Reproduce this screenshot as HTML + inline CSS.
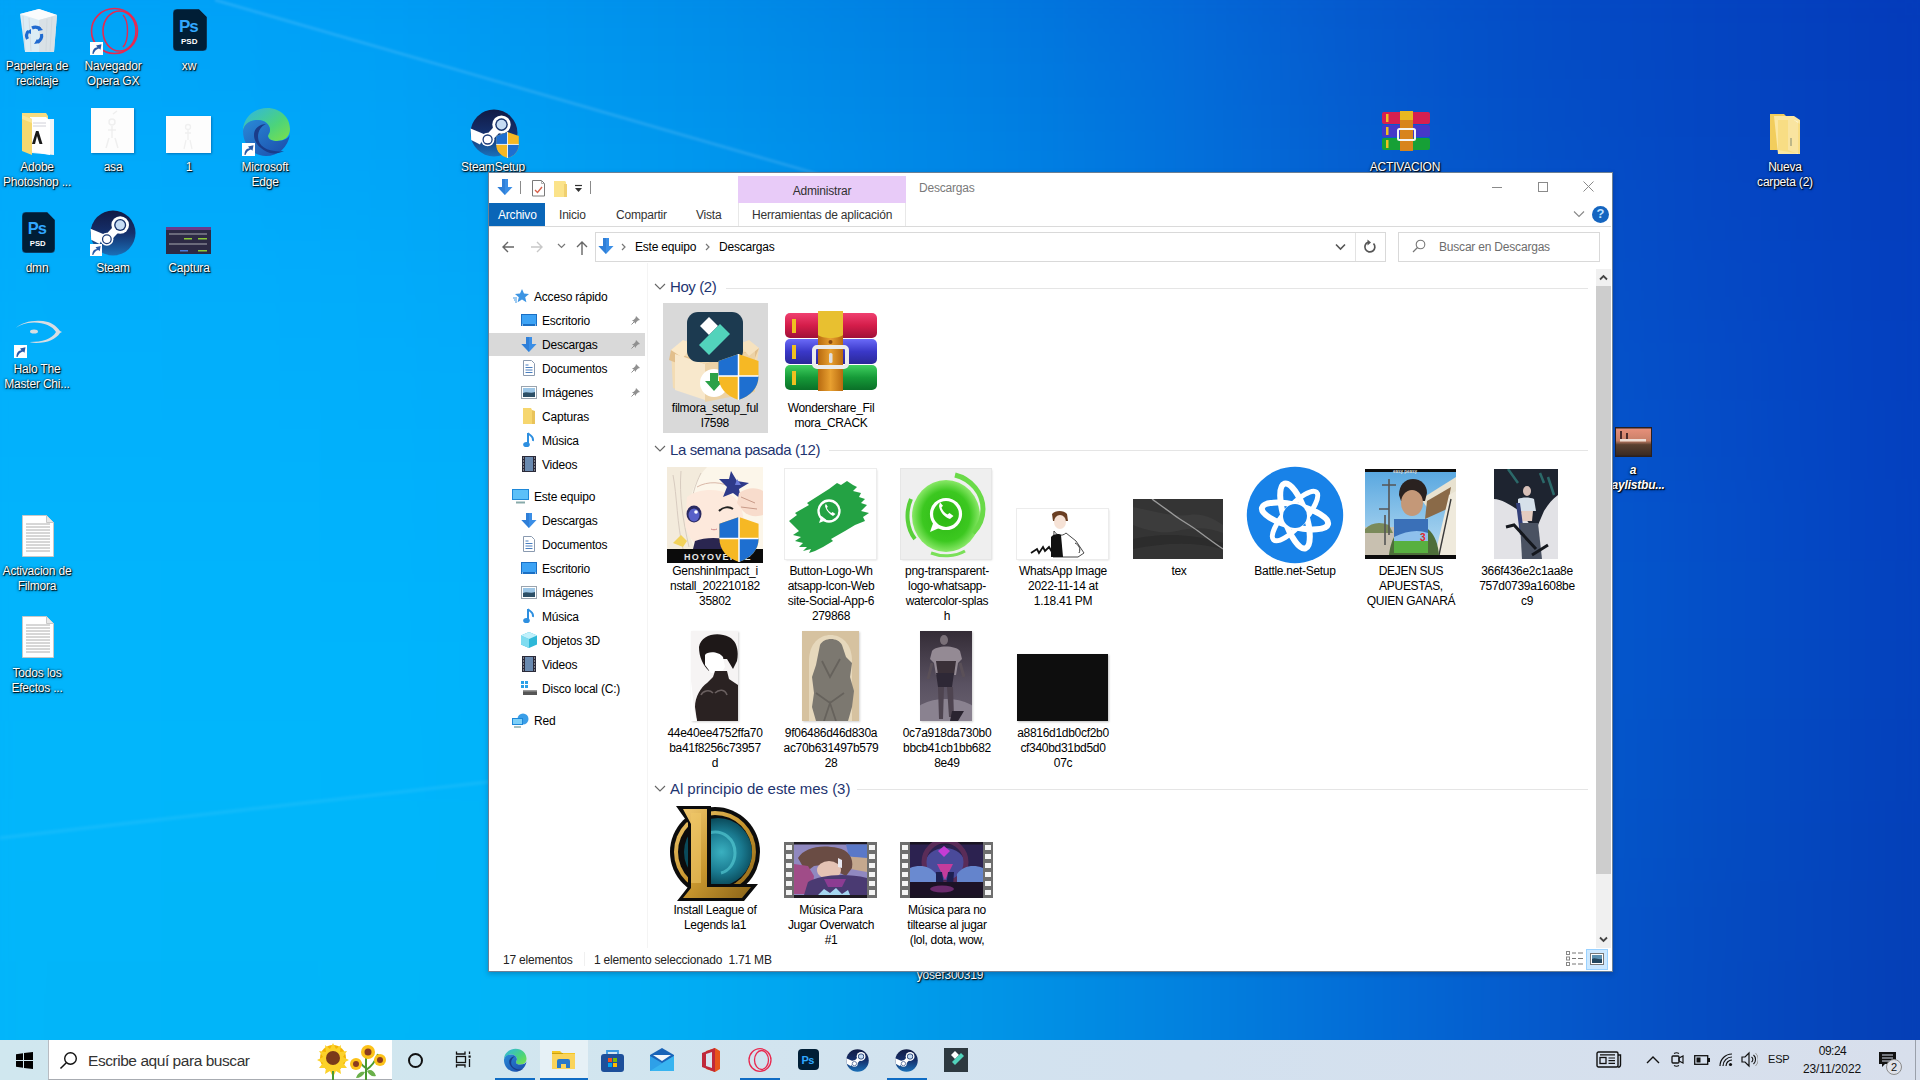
<!DOCTYPE html>
<html><head><meta charset="utf-8">
<style>
*{margin:0;padding:0;box-sizing:border-box}
html,body{width:1920px;height:1080px;overflow:hidden}
body{font-family:"Liberation Sans",sans-serif;font-size:12px;position:relative;background:#0a7fe0}
.a{position:absolute}
#wall{left:0;top:0;width:1920px;height:1040px;overflow:hidden}
#wallin{position:absolute;left:-80px;top:-80px;width:2080px;filter:blur(40px)}
.dl{position:absolute;width:80px;text-align:center;color:#fff;font-size:12px;line-height:15px;letter-spacing:-0.2px;
text-shadow:1px 1px 1px rgba(0,0,0,.95),0 0 2px rgba(0,0,0,.7),0 1px 3px rgba(0,0,0,.5)}
#win{left:488px;top:172px;width:1125px;height:800px;background:#fff;border:1px solid rgba(30,60,90,.65);box-shadow:0 2px 5px rgba(0,20,60,.25)}
.t{position:absolute;white-space:nowrap;font-size:12px;letter-spacing:-0.2px;color:#000;line-height:14px}
.gh{position:absolute;white-space:nowrap;font-size:15px;line-height:18px;color:#1e3470;letter-spacing:-0.4px}
.lb{position:absolute;width:120px;text-align:center;font-size:12px;line-height:15px;letter-spacing:-0.3px;color:#000;white-space:nowrap}
#tb{left:0;top:1040px;width:1920px;height:40px;background:linear-gradient(90deg,#d0e7ef 0%,#d1e6ef 25%,#d3e1ef 62%,#d8dfec 100%)}
</style></head>
<body>
<div id="wall" class="a"><div id="wallin"><div style="height:80px;background:linear-gradient(90deg,#00a5f8 0px,#00a2f7 160px,#009ff6 320px,#009af3 480px,#0093ed 640px,#008ae7 800px,#007fe2 960px,#0173dc 1120px,#0465d5 1280px,#0557cc 1440px,#044cc6 1600px,#0444c1 1760px,#043dbc 1920px,#0436b7 2080px)"></div>
<div style="height:80px;background:linear-gradient(90deg,#00a7f9 0px,#00a5f8 160px,#00a3f8 320px,#009ff5 480px,#0097ef 640px,#008ee9 800px,#0084e4 960px,#0178df 1120px,#0469d7 1280px,#055ace 1440px,#044ec7 1600px,#0446c2 1760px,#043fbd 1920px,#0437b8 2080px)"></div>
<div style="height:80px;background:linear-gradient(90deg,#00aafa 0px,#00a8fa 160px,#00a7fa 320px,#01a3f7 480px,#009cf1 640px,#0093ec 800px,#0089e7 960px,#007de1 1120px,#036dd9 1280px,#055ccf 1440px,#0450c8 1600px,#0447c3 1760px,#0440be 1920px,#0438b9 2080px)"></div>
<div style="height:80px;background:linear-gradient(90deg,#01acfb 0px,#01abfb 160px,#01aafb 320px,#01a7f8 480px,#01a1f3 640px,#0098ee 800px,#008de9 960px,#0081e4 1120px,#0371db 1280px,#0560d1 1440px,#0553c9 1600px,#0549c5 1760px,#0441c0 1920px,#0439ba 2080px)"></div>
<div style="height:80px;background:linear-gradient(90deg,#01affb 0px,#01adfb 160px,#02adfb 320px,#02abfa 480px,#01a5f6 640px,#009cf1 800px,#0092ec 960px,#0085e6 1120px,#0275dd 1280px,#0463d4 1440px,#0555cc 1600px,#054bc6 1760px,#0442c1 1920px,#043abb 2080px)"></div>
<div style="height:80px;background:linear-gradient(90deg,#01b1fc 0px,#02b0fc 160px,#02affb 320px,#02adfb 480px,#01a9f8 640px,#00a0f3 800px,#0095ed 960px,#0088e7 1120px,#0278df 1280px,#0467d5 1440px,#0558cd 1600px,#054dc7 1760px,#0443c2 1920px,#043bbb 2080px)"></div>
<div style="height:80px;background:linear-gradient(90deg,#02b2fc 0px,#02b1fc 160px,#02b1fc 320px,#01b0fb 480px,#00acf9 640px,#00a3f4 800px,#0098ee 960px,#008ae8 1120px,#027ae0 1280px,#0369d7 1440px,#055acf 1600px,#054ec8 1760px,#0444c2 1920px,#043bbb 2080px)"></div>
<div style="height:80px;background:linear-gradient(90deg,#02b4fc 0px,#02b3fc 160px,#02b3fc 320px,#01b2fc 480px,#00aefa 640px,#00a6f5 800px,#009aef 960px,#008ce8 1120px,#017ce0 1280px,#036bd8 1440px,#045cd0 1600px,#0550c9 1760px,#0445c2 1920px,#043bbb 2080px)"></div>
<div style="height:80px;background:linear-gradient(90deg,#02b5fc 0px,#02b4fc 160px,#01b4fc 320px,#00b4fc 480px,#00b0fa 640px,#00a8f5 800px,#009cef 960px,#008ee8 1120px,#017de1 1280px,#036cd8 1440px,#045dd0 1600px,#0451c9 1760px,#0446c1 1920px,#043cb9 2080px)"></div>
<div style="height:80px;background:linear-gradient(90deg,#02b6fc 0px,#02b5fc 160px,#01b5fc 320px,#00b5fc 480px,#00b1fa 640px,#00a9f5 800px,#009def 960px,#008fe8 1120px,#017ee1 1280px,#036dd8 1440px,#045dd0 1600px,#0451c8 1760px,#0446c0 1920px,#043cb8 2080px)"></div>
<div style="height:80px;background:linear-gradient(90deg,#02b6fc 0px,#02b6fb 160px,#01b6fb 320px,#00b5fb 480px,#00b2f9 640px,#00aaf5 800px,#009eef 960px,#0090e8 1120px,#017fe0 1280px,#036dd8 1440px,#045dcf 1600px,#0450c6 1760px,#0445be 1920px,#043bb7 2080px)"></div>
<div style="height:80px;background:linear-gradient(90deg,#02b7fc 0px,#02b6fb 160px,#01b6fa 320px,#00b6fa 480px,#00b3f8 640px,#00abf4 800px,#009fee 960px,#0090e7 1120px,#017fe0 1280px,#036dd7 1440px,#045cce 1600px,#044fc4 1760px,#0444bc 1920px,#053bb5 2080px)"></div>
<div style="height:80px;background:linear-gradient(90deg,#02b7fb 0px,#02b6fa 160px,#01b6f9 320px,#00b6f9 480px,#01b3f8 640px,#00abf3 800px,#009fed 960px,#0090e6 1120px,#0280df 1280px,#036dd7 1440px,#045bce 1600px,#054dc3 1760px,#0544bb 1920px,#053bb4 2080px)"></div>
<div style="height:80px;background:linear-gradient(90deg,#03b7fb 0px,#02b5f9 160px,#01b5f9 320px,#00b6f8 480px,#01b3f7 640px,#01abf2 800px,#009fec 960px,#0190e5 1120px,#0280de 1280px,#036dd7 1440px,#055bcd 1600px,#054dc3 1760px,#0543ba 1920px,#063ab2 2080px)"></div>
<div style="height:80px;background:linear-gradient(90deg,#03b7fa 0px,#02b5f9 160px,#02b5f8 320px,#01b5f7 480px,#02b2f6 640px,#01abf1 800px,#009feb 960px,#0190e4 1120px,#0280de 1280px,#046dd6 1440px,#055ccd 1600px,#064dc3 1760px,#0643b9 1920px,#063ab2 2080px)"></div>
<div style="height:80px;background:linear-gradient(90deg,#03b8fa 0px,#03b5f8 160px,#02b5f7 320px,#02b4f6 480px,#02b1f4 640px,#02a9f0 800px,#019eea 960px,#018fe3 1120px,#027fdd 1280px,#046ed5 1440px,#055ccc 1600px,#064fc2 1760px,#0644b9 1920px,#073bb1 2080px)"></div></div></div></div>


<svg width="0" height="0" style="position:absolute">
<defs>
 <symbol id="sc" viewBox="0 0 13 13"><rect width="13" height="13" fill="#fff"/><path d="M2.5 12C2.5 7.5 4.5 5.5 7.5 5.3L6 3.5 11.5 2.2 10.5 7.8 9 6.5C6.5 7 4.5 9 3.5 12z" fill="#2a5aa8"/></symbol>
 <symbol id="psd" viewBox="0 0 34 42"><path d="M4 0h22l8 8v30a4 4 0 0 1-4 4H4a4 4 0 0 1-4-4V4a4 4 0 0 1 4-4z" fill="#001e36" stroke="#2a9ae8" stroke-width=".8" stroke-opacity=".5"/><text x="6" y="23" font-family="Liberation Sans" font-weight="bold" font-size="17" fill="#31a8ff" letter-spacing="-1">Ps</text><text x="8" y="35" font-family="Liberation Sans" font-weight="bold" font-size="8" fill="#fff">PSD</text></symbol>
 <symbol id="doc" viewBox="0 0 32 42"><path d="M.5 .5h24l7 7v34H.5z" fill="#fff" stroke="#c8c8c8"/><path d="M24.5 .5v7h7" fill="#e8e8e8" stroke="#c8c8c8"/><g stroke="#9a9a9a" stroke-width=".8"><path d="M4 9h24M4 12h24M4 15h24M4 18h24M4 21h24M4 24h24M4 27h24M4 30h24M4 33h24M4 36h24"/></g></symbol>
 <symbol id="steam" viewBox="0 0 48 48"><defs><linearGradient id="stg" x1="0" y1="0" x2="0" y2="1"><stop offset="0" stop-color="#111a44"/><stop offset=".5" stop-color="#15306c"/><stop offset="1" stop-color="#1a70b8"/></linearGradient></defs><circle cx="24" cy="24" r="23.5" fill="url(#stg)"/><path d="M0.6 19.5L15 25.5 10 35.5 1.2 31z" fill="#fff"/><path d="M17.6 30.5L31.5 15.6" stroke="#fff" stroke-width="8"/><circle cx="31.5" cy="15.6" r="9.2" fill="#fff"/><circle cx="31.5" cy="15.6" r="6.3" fill="#14306a"/><circle cx="31.5" cy="15.6" r="4.9" fill="#c6dcf4"/><circle cx="17.6" cy="30.5" r="6.8" fill="#fff"/><circle cx="17.6" cy="30.5" r="4.5" fill="none" stroke="#1a3a78" stroke-width="1.3"/></symbol>
 <symbol id="rar" viewBox="0 0 48 40"><rect x="0" y="1" width="48" height="12" rx="2" fill="#d62050"/><rect x="0" y="14" width="48" height="12" rx="2" fill="#4638c8"/><rect x="0" y="27" width="48" height="12" rx="2" fill="#16a036"/><rect x="4" y="3" width="2.5" height="8" fill="#f0c020"/><rect x="4" y="16" width="2.5" height="8" fill="#f0c020"/><rect x="4" y="29" width="2.5" height="8" fill="#f0c020"/><rect x="18" y="0" width="13" height="40" fill="#d8841c"/><rect x="18" y="0" width="13" height="9" fill="#e8b820"/><rect x="16" y="18" width="17" height="11" rx="1.5" fill="none" stroke="#f4f4f4" stroke-width="2"/></symbol>
 <symbol id="fold" viewBox="0 0 32 42"><path d="M0 2h14l2 2h8v38L8 38H0z" fill="#f2cd5c"/><path d="M4 4h20l6 4v34H8z" fill="#fbe7a2"/><path d="M18 8h6l4 2v32l-10-4z" fill="#fff"/><path d="M21 26v8" stroke="#3a6ab0" stroke-width="2"/><path d="M8 8l16 0 6 4v30L8 38z" fill="#f7d978" opacity=".7"/></symbol>
 <symbol id="shield" viewBox="0 0 40 46"><path d="M20 0l20 7v15c0 12-8 20-20 24C8 42 0 34 0 22V7z" fill="#f6b824"/><path d="M20 0v22H0V7z" fill="#1e6fd0"/><path d="M20 22h20c0 12-8 20-20 24z" fill="#1e6fd0"/><path d="M20 0v46M0 22h40" stroke="#fff" stroke-width="1.5"/></symbol>
</defs></svg>
<!-- DESKTOP ICONS -->
<svg class="a" style="left:18px;top:8px" width="40" height="45" viewBox="0 0 40 45"><path d="M2 6l19-5 18 6-3 37H7z" fill="#eef2f4" opacity=".92"/><path d="M2 6l19-5 18 6-18 5z" fill="#fafcfd"/><path d="M21 12l18-5-3 37H21z" fill="#d8e0e4" opacity=".9"/><path d="M5 8l2 34M11 10l2 33M29 11l-1 32M34 9l-2 34" stroke="#c8d2d8" stroke-width=".6"/><g fill="none" stroke="#1e6ad0" stroke-width="3.2"><path d="M9.5 31a7 7 0 0 1 1-8"/><path d="M14 20a7 7 0 0 1 8 1"/><path d="M23.5 26a7 7 0 0 1-4 8"/></g><g fill="#1e6ad0"><path d="M8 24l5-3 0 5z"/><path d="M21 18l4 4-5 1z"/><path d="M16 36l3-5 3 4z"/></g></svg>
<svg class="a" style="left:90px;top:7px" width="49" height="48" viewBox="0 0 49 48"><ellipse cx="24.5" cy="24" rx="23" ry="22.5" fill="none" stroke="#e8294f" stroke-width="1.6"/><ellipse cx="29.5" cy="24" rx="16.5" ry="20" fill="none" stroke="#e8294f" stroke-width="1.6"/><path d="M33 8c6 6 6 26 0 32" fill="none" stroke="#e8294f" stroke-width="1.4"/></svg>
<svg class="a" style="left:90px;top:42px" width="13" height="13"><use href="#sc"/></svg>
<svg class="a" style="left:173px;top:9px" width="34" height="42"><use href="#psd"/></svg>
<svg class="a" style="left:22px;top:113px" width="32" height="42" viewBox="0 0 32 42"><path d="M0 0h24l2 3v5H0z" fill="#f8dc80"/><path d="M10 6h22v36L10 40z" fill="#eef4f8"/><path d="M8 4h16l4 4v34L8 38z" fill="#fff"/><path d="M11 10h13M11 13h13" stroke="#d0d0d8" stroke-width="1"/><path d="M10 31l4-13h2.5l4 13h-3L15 23l-2 8z" fill="#1a1a1a"/><path d="M0 2l10 4v36L0 38z" fill="#f6d870"/><path d="M0 2l10 4v4L0 6z" fill="#fbe69a"/></svg>
<div class="a" style="left:91px;top:108px;width:43px;height:45px;background:#fdfdfd;box-shadow:1px 1px 2px rgba(0,30,80,.35)"></div><svg class="a" style="left:91px;top:108px" width="43" height="45" viewBox="0 0 43 45"><g fill="none" stroke="#efefef" stroke-width="1.5"><circle cx="21" cy="14" r="3"/><path d="M21 18v12M17 22l8 0M18 30l-3 10M24 30l3 10M22 6l4-3"/></g></svg>
<div class="a" style="left:166px;top:116px;width:45px;height:37px;background:#fdfdfd;box-shadow:1px 1px 2px rgba(0,30,80,.35)"></div><svg class="a" style="left:166px;top:116px" width="45" height="37" viewBox="0 0 45 37"><g fill="none" stroke="#f0f0f0" stroke-width="1.3"><circle cx="22" cy="11" r="2.5"/><path d="M22 14v10M19 17l6 0M20 24l-2 9M24 24l2 9"/></g></svg>
<svg class="a" style="left:241px;top:107px" width="50" height="49" viewBox="0 0 50 49"><defs><linearGradient id="eg1" x1="0" y1="0" x2="1" y2="1"><stop offset="0" stop-color="#2fb4e8"/><stop offset=".6" stop-color="#4cd47a"/><stop offset="1" stop-color="#7ee04a"/></linearGradient><linearGradient id="eg2" x1="0" y1="0" x2="1" y2="1"><stop offset="0" stop-color="#2a8ad8"/><stop offset="1" stop-color="#1a4aa8"/></linearGradient></defs><path d="M2 24C2 10 14 1 26 1c14 0 23 10 23 21 0 8-6 12-13 12-5 0-9-2-9-5 0-2 2-3 2-6 0-6-6-10-12-10C9 13 3 18 2 24z" fill="url(#eg1)"/><path d="M2 24c1-7 7-11 15-11 6 0 12 4 12 10 0 3-2 4-2 6 0 3 4 5 9 5 7 0 12-3 13-7-2 14-12 22-24 22C12 49 2 38 2 24z" fill="url(#eg2)"/><path d="M17 30c0-6 3-11 8-13-6 0-12 4-12 11 0 8 7 15 16 18 5 1 10 0 14-2-14 2-26-4-26-14z" fill="#1a3c8a"/></svg>
<svg class="a" style="left:242px;top:143px" width="13" height="13"><use href="#sc"/></svg>
<svg class="a" style="left:22px;top:212px" width="33" height="41"><use href="#psd"/></svg>
<svg class="a" style="left:90px;top:210px" width="46" height="46"><use href="#steam"/></svg>
<svg class="a" style="left:90px;top:244px" width="12" height="12"><use href="#sc"/></svg>
<svg class="a" style="left:166px;top:227px" width="45" height="27" viewBox="0 0 45 27"><rect width="45" height="27" fill="#2c2a44"/><rect x="0" y="0" width="45" height="3" fill="#6a3a8a"/><rect x="3" y="6" width="38" height="2" fill="#6a6a7a"/><rect x="18" y="11" width="8" height="1.5" fill="#8ac83a"/><rect x="32" y="11" width="9" height="1.5" fill="#8ac83a"/><rect x="3" y="16" width="38" height="2" fill="#6a6a7a"/><rect x="14" y="23" width="8" height="1.5" fill="#4a7ad8"/><rect x="32" y="23" width="9" height="1.5" fill="#8ac83a"/></svg>
<svg class="a" style="left:14px;top:319px" width="48" height="25" viewBox="0 0 48 25"><path d="M2 9C8 3 22 0 34 3c6 2 9 5 12 9l2 1-2 1c-4 6-12 10-24 10-4 0-6-1-6-1 12 0 22-3 26-10C38 6 26 2 14 4 8 5 4 7 2 9z" fill="#d8dde2"/><ellipse cx="20" cy="12.5" rx="4" ry="2" fill="#d8dde2"/></svg>
<svg class="a" style="left:14px;top:345px" width="13" height="13"><use href="#sc"/></svg>
<svg class="a" style="left:22px;top:515px" width="32" height="42"><use href="#doc"/></svg>
<svg class="a" style="left:22px;top:616px" width="32" height="42"><use href="#doc"/></svg>
<svg class="a" style="left:470px;top:109px" width="49" height="49" viewBox="0 0 49 49"><use href="#steam" width="48" height="48"/><use href="#shield" x="26" y="23" width="23" height="26"/></svg>
<svg class="a" style="left:1382px;top:111px" width="48" height="40"><use href="#rar"/></svg>
<svg class="a" style="left:1770px;top:112px" width="32" height="42"><use href="#fold"/></svg>
<svg class="a" style="left:1615px;top:427px" width="37" height="30" viewBox="0 0 37 30"><defs><linearGradient id="plg" x1="0" y1="0" x2="0" y2="1"><stop offset="0" stop-color="#e8907a"/><stop offset=".45" stop-color="#c88068"/><stop offset=".6" stop-color="#5a4030"/><stop offset="1" stop-color="#3a2a22"/></linearGradient></defs><rect width="37" height="30" fill="#2a2020"/><rect x="1" y="1.5" width="35" height="27" fill="url(#plg)"/><path d="M6 4v8M12 6v6" stroke="#4a2a2a" stroke-width="2"/><rect x="5" y="12" width="26" height="2.5" fill="#f4ece6" opacity=".85"/></svg>
<svg class="a" style="left:0;top:0" width="1920" height="1040"><path d="M215 0L1400 342" stroke="rgba(255,255,255,.12)" stroke-width="3" filter="url(#rb)"/><path d="M0 838L1200 700" stroke="rgba(255,255,255,.06)" stroke-width="4" filter="url(#rb)"/><defs><filter id="rb"><feGaussianBlur stdDeviation="1.2"/></filter></defs></svg>
<!-- desktop labels -->
<div class="dl" style="left:-3px;top:59px">Papelera de<br>reciclaje</div>
<div class="dl" style="left:73px;top:59px">Navegador<br>Opera GX</div>
<div class="dl" style="left:149px;top:59px">xw</div>
<div class="dl" style="left:-3px;top:160px">Adobe<br>Photoshop ...</div>
<div class="dl" style="left:73px;top:160px">asa</div>
<div class="dl" style="left:149px;top:160px">1</div>
<div class="dl" style="left:225px;top:160px">Microsoft<br>Edge</div>
<div class="dl" style="left:-3px;top:261px">dmn</div>
<div class="dl" style="left:73px;top:261px">Steam</div>
<div class="dl" style="left:149px;top:261px">Captura</div>
<div class="dl" style="left:-3px;top:362px">Halo The<br>Master Chi...</div>
<div class="dl" style="left:-3px;top:564px">Activacion de<br>Filmora</div>
<div class="dl" style="left:-3px;top:666px">Todos los<br>Efectos ...</div>
<div class="dl" style="left:453px;top:160px">SteamSetup</div>
<div class="dl" style="left:1365px;top:160px">ACTIVACION</div>
<div class="dl" style="left:1745px;top:160px">Nueva<br>carpeta (2)</div>
<div class="dl" style="left:1593px;top:463px;font-style:italic;font-weight:bold">a<br>playlistbu...</div>
<div class="dl" style="left:900px;top:968px;width:100px">yosef300319</div>


<!-- ===== EXPLORER ===== -->
<div id="win" class="a"></div>
<!-- QAT -->
<svg class="a" style="left:496px;top:178px" width="18" height="18" viewBox="0 0 18 18"><path d="M6 1h6v8h4.5L9 17 1.5 9H6z" fill="#3a8ee6"/><path d="M6 1h3v16L1.5 9H6z" fill="#2f7fd8"/></svg>
<div class="a" style="left:520px;top:181px;width:1px;height:13px;background:#8a8a8a"></div>
<svg class="a" style="left:532px;top:180px" width="13" height="17" viewBox="0 0 13 17"><path d="M.5 .5h9l3 3v12.5H.5z" fill="#fff" stroke="#7a7a7a"/><path d="M9.5 .5v3h3" fill="none" stroke="#9a9a9a" stroke-width=".8"/><path d="M3 10l2.5 2.5L10 7" fill="none" stroke="#d8604a" stroke-width="1.4"/></svg>
<svg class="a" style="left:554px;top:180px" width="13" height="17" viewBox="0 0 13 17"><path d="M0 1h11l1 1v15H0z" fill="#fbe38a"/><path d="M10 4h3v13h-3z" fill="#f0d070"/></svg>
<svg class="a" style="left:574px;top:184px" width="9" height="9" viewBox="0 0 9 9"><path d="M1 1.5h7" stroke="#333" stroke-width="1.2"/><path d="M1 4h7L4.5 8z" fill="#333"/></svg>
<div class="a" style="left:590px;top:181px;width:1px;height:13px;background:#8a8a8a"></div>
<!-- contextual tab -->
<div class="a" style="left:738px;top:176px;width:168px;height:27px;background:#e8cbf8"></div>
<div class="t" style="left:738px;top:184px;width:168px;text-align:center;color:#303030">Administrar</div>
<div class="a" style="left:738px;top:203px;width:1px;height:23px;background:#e8e8e8"></div>
<div class="a" style="left:905px;top:203px;width:1px;height:23px;background:#e8e8e8"></div>
<div class="t" style="left:919px;top:181px;color:#7a7a7a">Descargas</div>
<!-- caption buttons -->
<div class="a" style="left:1492px;top:187px;width:10px;height:1px;background:#8a8a8a"></div>
<div class="a" style="left:1538px;top:182px;width:10px;height:10px;border:1px solid #8a8a8a"></div>
<svg class="a" style="left:1583px;top:181px" width="11" height="11" viewBox="0 0 11 11"><path d="M.5 .5l10 10M10.5 .5l-10 10" stroke="#8a8a8a" stroke-width="1"/></svg>
<!-- tabs -->
<div class="a" style="left:489px;top:203px;width:56px;height:23px;background:#0a66b8"></div>
<div class="t" style="left:498px;top:208px;color:#fff">Archivo</div>
<div class="t" style="left:559px;top:208px;color:#333">Inicio</div>
<div class="t" style="left:616px;top:208px;color:#333">Compartir</div>
<div class="t" style="left:696px;top:208px;color:#333">Vista</div>
<div class="t" style="left:752px;top:208px;color:#333">Herramientas de aplicación</div>
<svg class="a" style="left:1573px;top:210px" width="12" height="8" viewBox="0 0 12 8"><path d="M1 1.5l5 5 5-5" fill="none" stroke="#888" stroke-width="1.1"/></svg>
<div class="a" style="left:1592px;top:206px;width:17px;height:17px;border-radius:50%;background:#1565c0"></div>
<div class="t" style="left:1592px;top:207px;width:17px;text-align:center;color:#bfe3ff;font-weight:bold;font-size:13px;letter-spacing:0">?</div>
<div class="a" style="left:489px;top:226px;width:1122px;height:1px;background:#dadada"></div>
<!-- nav buttons -->
<svg class="a" style="left:501px;top:240px" width="14" height="14" viewBox="0 0 14 14"><path d="M13 7H2M7 2L2 7l5 5" fill="none" stroke="#666" stroke-width="1.4"/></svg>
<svg class="a" style="left:530px;top:240px" width="14" height="14" viewBox="0 0 14 14"><path d="M1 7h11M7 2l5 5-5 5" fill="none" stroke="#c8c8c8" stroke-width="1.4"/></svg>
<svg class="a" style="left:557px;top:243px" width="9" height="6" viewBox="0 0 9 6"><path d="M1 1l3.5 3.5L8 1" fill="none" stroke="#777" stroke-width="1.2"/></svg>
<svg class="a" style="left:575px;top:240px" width="14" height="16" viewBox="0 0 14 16"><path d="M7 15V2M2 7l5-5 5 5" fill="none" stroke="#666" stroke-width="1.4"/></svg>
<!-- address box -->
<div class="a" style="left:595px;top:232px;width:791px;height:30px;border:1px solid #d9d9d9"></div>
<div class="a" style="left:1355px;top:233px;width:1px;height:28px;background:#e3e3e3"></div>
<svg class="a" style="left:597px;top:237px" width="18" height="18" viewBox="0 0 18 18"><path d="M6 1h6v8h4.5L9 17 1.5 9H6z" fill="#3a8ee6"/><path d="M6 1h3v16L1.5 9H6z" fill="#2f7fd8"/></svg>
<svg class="a" style="left:621px;top:243px" width="6" height="8" viewBox="0 0 6 8"><path d="M1 1l3 3-3 3" fill="none" stroke="#777" stroke-width="1.2"/></svg>
<div class="t" style="left:635px;top:240px;color:#000">Este equipo</div>
<svg class="a" style="left:705px;top:243px" width="6" height="8" viewBox="0 0 6 8"><path d="M1 1l3 3-3 3" fill="none" stroke="#777" stroke-width="1.2"/></svg>
<div class="t" style="left:719px;top:240px;color:#000">Descargas</div>
<svg class="a" style="left:1335px;top:243px" width="11" height="8" viewBox="0 0 11 8"><path d="M1 1.5l4.5 4.5L10 1.5" fill="none" stroke="#555" stroke-width="1.6"/></svg>
<svg class="a" style="left:1363px;top:239px" width="14" height="15" viewBox="0 0 14 15"><path d="M10.5 4.5A5 5 0 1 1 5 3.3" fill="none" stroke="#555" stroke-width="1.7"/><path d="M4.5 0.5L8 3.5 4.5 6.5z" fill="#555"/></svg>
<div class="a" style="left:1398px;top:232px;width:202px;height:30px;border:1px solid #d9d9d9"></div>
<svg class="a" style="left:1412px;top:239px" width="14" height="14" viewBox="0 0 14 14"><circle cx="8.5" cy="5.5" r="4.3" fill="none" stroke="#777" stroke-width="1.1"/><path d="M5.5 8.5L1 13" stroke="#777" stroke-width="1.2"/></svg>
<div class="t" style="left:1439px;top:240px;color:#6d6d6d">Buscar en Descargas</div>
<!-- nav pane separator -->
<div class="a" style="left:647px;top:263px;width:1px;height:685px;background:#f4f4f4"></div>
<!-- scrollbar -->
<div class="a" style="left:1596px;top:269px;width:15px;height:679px;background:#f0f0f0"></div>
<div class="a" style="left:1596px;top:286px;width:15px;height:588px;background:#cdcdcd"></div>
<svg class="a" style="left:1599px;top:274px" width="9" height="7" viewBox="0 0 9 7"><path d="M1 5.5l3.5-3.5L8 5.5" fill="none" stroke="#444" stroke-width="1.8"/></svg>
<svg class="a" style="left:1599px;top:936px" width="9" height="7" viewBox="0 0 9 7"><path d="M1 1.5l3.5 3.5L8 1.5" fill="none" stroke="#444" stroke-width="1.8"/></svg>

<!-- NAV PANE -->
<div class="a" style="left:489px;top:333px;width:156px;height:23px;background:#d9d9d9"></div>
<svg class="a" style="left:513px;top:289px" width="16" height="14" viewBox="0 0 16 14"><path d="M9 0l2 4.5 5 .4-3.8 3.3 1.2 5L9 10.5 4.6 13.2l1.2-5L2 4.9l5-.4z" fill="#3d95e3"/><path d="M0 9h4M1 11h3M2 13h2" stroke="#3d95e3" stroke-width="1"/></svg>
<div class="t" style="left:534px;top:290px">Acceso rápido</div>
<!-- quick access items -->
<svg class="a" style="left:521px;top:314px" width="16" height="12" viewBox="0 0 16 12"><rect x="0" y="0" width="16" height="12" fill="#1a6fc4"/><rect x="1" y="1" width="14" height="9" fill="#3da3f5"/><path d="M1 11h1M14 11h1" stroke="#fff"/></svg>
<div class="t" style="left:542px;top:314px">Escritorio</div>
<svg class="a" style="left:521px;top:336px" width="16" height="17" viewBox="0 0 16 17"><path d="M5 1h6v7h4.5L8 16 .5 8H5z" fill="#3a8ee6"/><path d="M5 1h3v15L.5 8H5z" fill="#2f7fd8"/></svg>
<div class="t" style="left:542px;top:338px">Descargas</div>
<svg class="a" style="left:523px;top:360px" width="12" height="16" viewBox="0 0 12 16"><path d="M.5 .5h8l3 3v12H.5z" fill="#fff" stroke="#8a9ab0"/><path d="M2.5 5h3M2.5 7.5h7M2.5 10h7M2.5 12.5h7" stroke="#4a7fc0" stroke-width="1"/></svg>
<div class="t" style="left:542px;top:362px">Documentos</div>
<svg class="a" style="left:521px;top:386px" width="16" height="13" viewBox="0 0 16 13"><rect x=".5" y=".5" width="15" height="12" fill="#fff" stroke="#9aa4ae"/><rect x="2" y="2" width="12" height="9" fill="#9cc6e6"/><path d="M2 7c4-2 7 1 12-1v5H2z" fill="#2d4f66"/></svg>
<div class="t" style="left:542px;top:386px">Imágenes</div>
<svg class="a" style="left:523px;top:408px" width="13" height="16" viewBox="0 0 13 16"><path d="M0 0h8l1 2v14H0z" fill="#f6d66e"/><path d="M9 2l3 1v13H9z" fill="#e9c35a"/></svg>
<div class="t" style="left:542px;top:410px">Capturas</div>
<svg class="a" style="left:523px;top:432px" width="12" height="16" viewBox="0 0 12 16"><path d="M5 1v10.5" stroke="#2d8fe0" stroke-width="2"/><ellipse cx="3.5" cy="12.5" rx="3.3" ry="2.6" fill="#2d8fe0"/><path d="M5 1c2 3 6 3 5 8" fill="none" stroke="#2d8fe0" stroke-width="1.8"/></svg>
<div class="t" style="left:542px;top:434px">Música</div>
<svg class="a" style="left:522px;top:456px" width="14" height="16" viewBox="0 0 14 16"><rect x="0" y="0" width="14" height="16" fill="#2a2a3a"/><rect x="3" y="1" width="8" height="14" fill="#6a8ab0"/><path d="M1 2h1M1 5h1M1 8h1M1 11h1M1 14h1M12 2h1M12 5h1M12 8h1M12 11h1M12 14h1" stroke="#ddd"/></svg>
<div class="t" style="left:542px;top:458px">Videos</div>
<!-- pins -->
<svg class="a" style="left:631px;top:315px" width="10" height="10" viewBox="0 0 10 10"><path d="M5 1l4 4-2 .5-2 2L5 9 1 5l1.5 0 2-2z" fill="#909090"/><path d="M3 7L.5 9.5" stroke="#909090"/></svg>
<svg class="a" style="left:631px;top:339px" width="10" height="10" viewBox="0 0 10 10"><path d="M5 1l4 4-2 .5-2 2L5 9 1 5l1.5 0 2-2z" fill="#909090"/><path d="M3 7L.5 9.5" stroke="#909090"/></svg>
<svg class="a" style="left:631px;top:363px" width="10" height="10" viewBox="0 0 10 10"><path d="M5 1l4 4-2 .5-2 2L5 9 1 5l1.5 0 2-2z" fill="#909090"/><path d="M3 7L.5 9.5" stroke="#909090"/></svg>
<svg class="a" style="left:631px;top:387px" width="10" height="10" viewBox="0 0 10 10"><path d="M5 1l4 4-2 .5-2 2L5 9 1 5l1.5 0 2-2z" fill="#909090"/><path d="M3 7L.5 9.5" stroke="#909090"/></svg>
<!-- Este equipo -->
<svg class="a" style="left:512px;top:489px" width="17" height="15" viewBox="0 0 17 15"><rect x="0" y="0" width="17" height="11" fill="#1e88d8"/><rect x="1" y="1" width="15" height="9" fill="#5cc0f8"/><path d="M4 13.5h9" stroke="#8aa" stroke-width="2"/></svg>
<div class="t" style="left:534px;top:490px">Este equipo</div>
<svg class="a" style="left:521px;top:512px" width="16" height="17" viewBox="0 0 16 17"><path d="M5 1h6v7h4.5L8 16 .5 8H5z" fill="#3a8ee6"/><path d="M5 1h3v15L.5 8H5z" fill="#2f7fd8"/></svg>
<div class="t" style="left:542px;top:514px">Descargas</div>
<svg class="a" style="left:523px;top:536px" width="12" height="16" viewBox="0 0 12 16"><path d="M.5 .5h8l3 3v12H.5z" fill="#fff" stroke="#8a9ab0"/><path d="M2.5 5h3M2.5 7.5h7M2.5 10h7M2.5 12.5h7" stroke="#4a7fc0" stroke-width="1"/></svg>
<div class="t" style="left:542px;top:538px">Documentos</div>
<svg class="a" style="left:521px;top:562px" width="16" height="12" viewBox="0 0 16 12"><rect x="0" y="0" width="16" height="12" fill="#1a6fc4"/><rect x="1" y="1" width="14" height="9" fill="#3da3f5"/><path d="M1 11h1M14 11h1" stroke="#fff"/></svg>
<div class="t" style="left:542px;top:562px">Escritorio</div>
<svg class="a" style="left:521px;top:586px" width="16" height="13" viewBox="0 0 16 13"><rect x=".5" y=".5" width="15" height="12" fill="#fff" stroke="#9aa4ae"/><rect x="2" y="2" width="12" height="9" fill="#9cc6e6"/><path d="M2 7c4-2 7 1 12-1v5H2z" fill="#2d4f66"/></svg>
<div class="t" style="left:542px;top:586px">Imágenes</div>
<svg class="a" style="left:523px;top:608px" width="12" height="16" viewBox="0 0 12 16"><path d="M5 1v10.5" stroke="#2d8fe0" stroke-width="2"/><ellipse cx="3.5" cy="12.5" rx="3.3" ry="2.6" fill="#2d8fe0"/><path d="M5 1c2 3 6 3 5 8" fill="none" stroke="#2d8fe0" stroke-width="1.8"/></svg>
<div class="t" style="left:542px;top:610px">Música</div>
<svg class="a" style="left:521px;top:632px" width="16" height="16" viewBox="0 0 16 16"><path d="M8 0l8 3.5v9L8 16 0 12.5v-9z" fill="#2eb8d8"/><path d="M8 7v9L0 12.5v-9z" fill="#7fdcf0"/><path d="M8 0l8 3.5L8 7 0 3.5z" fill="#bff0fb"/></svg>
<div class="t" style="left:542px;top:634px">Objetos 3D</div>
<svg class="a" style="left:522px;top:656px" width="14" height="16" viewBox="0 0 14 16"><rect x="0" y="0" width="14" height="16" fill="#2a2a3a"/><rect x="3" y="1" width="8" height="14" fill="#6a8ab0"/><path d="M1 2h1M1 5h1M1 8h1M1 11h1M1 14h1M12 2h1M12 5h1M12 8h1M12 11h1M12 14h1" stroke="#ddd"/></svg>
<div class="t" style="left:542px;top:658px">Videos</div>
<svg class="a" style="left:521px;top:681px" width="16" height="14" viewBox="0 0 16 14"><rect x="0" y="0" width="3" height="3" fill="#2aa0e8"/><rect x="4" y="0" width="3" height="3" fill="#2aa0e8"/><rect x="0" y="4" width="3" height="3" fill="#2aa0e8"/><rect x="4" y="4" width="3" height="3" fill="#2aa0e8"/><rect x="2" y="9" width="14" height="5" fill="#555"/><rect x="2" y="9" width="14" height="1.5" fill="#999"/></svg>
<div class="t" style="left:542px;top:682px">Disco local (C:)</div>
<!-- Red -->
<svg class="a" style="left:512px;top:713px" width="17" height="15" viewBox="0 0 17 15"><circle cx="11" cy="6" r="5.5" fill="#3a9ee8"/><rect x="0" y="5" width="11" height="7" fill="#1e88d8"/><rect x="1" y="6" width="9" height="5" fill="#7ccff8"/><path d="M2 14h7" stroke="#8aa" stroke-width="1.5"/></svg>
<div class="t" style="left:534px;top:714px">Red</div>

<!-- CONTENT -->
<div class="a" style="left:663px;top:303px;width:105px;height:130px;background:#d9d9d9"></div>
<svg class="a" style="left:654px;top:283px" width="12" height="7" viewBox="0 0 12 7"><path d="M1 1l5 5 5-5" fill="none" stroke="#666" stroke-width="1.1"/></svg>
<div class="gh" style="left:670px;top:278px">Hoy (2)</div>
<div class="a" style="left:726px;top:288px;width:862px;height:1px;background:#e5e5e5"></div>
<svg class="a" style="left:654px;top:445px" width="12" height="7" viewBox="0 0 12 7"><path d="M1 1l5 5 5-5" fill="none" stroke="#666" stroke-width="1.1"/></svg>
<div class="gh" style="left:670px;top:441px">La semana pasada (12)</div>
<div class="a" style="left:829px;top:450px;width:759px;height:1px;background:#e5e5e5"></div>
<svg class="a" style="left:654px;top:785px" width="12" height="7" viewBox="0 0 12 7"><path d="M1 1l5 5 5-5" fill="none" stroke="#666" stroke-width="1.1"/></svg>
<div class="gh" style="left:670px;top:780px;letter-spacing:-0.05px">Al principio de este mes (3)</div>
<div class="a" style="left:857px;top:789px;width:731px;height:1px;background:#e5e5e5"></div>
<div class="lb" style="left:655px;top:401px">filmora_setup_ful<br>l7598</div>
<div class="lb" style="left:771px;top:401px">Wondershare_Fil<br>mora_CRACK</div>
<div class="lb" style="left:655px;top:564px">GenshinImpact_i<br>nstall_202210182<br>35802</div>
<div class="lb" style="left:771px;top:564px">Button-Logo-Wh<br>atsapp-Icon-Web<br>site-Social-App-6<br>279868</div>
<div class="lb" style="left:887px;top:564px">png-transparent-<br>logo-whatsapp-<br>watercolor-splas<br>h</div>
<div class="lb" style="left:1003px;top:564px">WhatsApp Image<br>2022-11-14 at<br>1.18.41 PM</div>
<div class="lb" style="left:1119px;top:564px">tex</div>
<div class="lb" style="left:1235px;top:564px">Battle.net-Setup</div>
<div class="lb" style="left:1351px;top:564px">DEJEN SUS<br>APUESTAS,<br>QUIEN GANARÁ</div>
<div class="lb" style="left:1467px;top:564px">366f436e2c1aa8e<br>757d0739a1608be<br>c9</div>
<div class="lb" style="left:655px;top:726px">44e40ee4752ffa70<br>ba41f8256c73957<br>d</div>
<div class="lb" style="left:771px;top:726px">9f06486d46d830a<br>ac70b631497b579<br>28</div>
<div class="lb" style="left:887px;top:726px">0c7a918da730b0<br>bbcb41cb1bb682<br>8e49</div>
<div class="lb" style="left:1003px;top:726px">a8816d1db0cf2b0<br>cf340bd31bd5d0<br>07c</div>
<div class="lb" style="left:655px;top:903px">Install League of<br>Legends la1</div>
<div class="lb" style="left:771px;top:903px">Música Para<br>Jugar Overwatch<br>#1</div>
<div class="lb" style="left:887px;top:903px">Música para no<br>tiltearse al jugar<br>(lol, dota, wow,</div>

<!-- ICONS: Hoy -->
<svg class="a" style="left:667px;top:308px" width="96" height="94" viewBox="0 0 96 94">
 <path d="M4 42l20-12 16 6 22-8 30 12-6 42-44 10-36-12z" fill="#f3dcb4"/>
 <path d="M4 42l34 14 54-16-4 10-50 16-36-14z" fill="#e2bf8c"/>
 <path d="M38 56v36L8 82V46z" fill="#f8e8cc"/>
 <path d="M38 56l50-14v42l-50 10z" fill="#ecd2a6"/>
 <path d="M4 42l12-10 10 4-10 14z" fill="#fbe9c9"/>
 <path d="M92 40l-10-8-10 4 10 12z" fill="#f6e2bf"/>
 <rect x="20" y="4" width="56" height="50" rx="11" fill="#1c3a50"/>
 <path d="M33 18l9-9 9 9-9 9z" fill="#fff"/>
 <path d="M42 27l11-11 10 10-21 21-10-10z" fill="#52d3bb"/>
 <circle cx="47" cy="75" r="14" fill="#fff"/>
 <path d="M43 65h8v8h5l-9 10-9-10h5z" fill="#2aa148"/>
 <use href="#shield" x="50" y="46" width="43" height="46"/>
</svg>
<svg class="a" style="left:784px;top:311px" width="94" height="80" viewBox="0 0 94 80">
 <defs><linearGradient id="rr" x1="0" y1="0" x2="0" y2="1"><stop offset="0" stop-color="#f04070"/><stop offset=".5" stop-color="#d41d4a"/><stop offset="1" stop-color="#a01038"/></linearGradient>
 <linearGradient id="rb2" x1="0" y1="0" x2="0" y2="1"><stop offset="0" stop-color="#6a6af8"/><stop offset=".5" stop-color="#3a38c8"/><stop offset="1" stop-color="#2a2898"/></linearGradient>
 <linearGradient id="rg" x1="0" y1="0" x2="0" y2="1"><stop offset="0" stop-color="#40d060"/><stop offset=".5" stop-color="#169a38"/><stop offset="1" stop-color="#0a7028"/></linearGradient>
 <linearGradient id="rbelt" x1="0" y1="0" x2="1" y2="0"><stop offset="0" stop-color="#b86a10"/><stop offset=".5" stop-color="#e8a030"/><stop offset="1" stop-color="#b86a10"/></linearGradient></defs>
 <rect x="1" y="2" width="92" height="25" rx="5" fill="url(#rr)"/>
 <rect x="1" y="28" width="92" height="25" rx="5" fill="url(#rb2)"/>
 <rect x="1" y="54" width="92" height="25" rx="5" fill="url(#rg)"/>
 <rect x="8" y="8" width="4" height="14" fill="#f0c020"/>
 <rect x="8" y="34" width="4" height="14" fill="#f0c020"/>
 <rect x="8" y="60" width="4" height="14" fill="#f0c020"/>
 <rect x="34" y="0" width="25" height="80" fill="url(#rbelt)"/>
 <path d="M34 0h25v24c-4 4-21 4-25 0z" fill="#e8c030"/>
 <circle cx="46.5" cy="31" r="2" fill="#8a4a10"/>
 <rect x="30" y="36" width="33" height="20" rx="3" fill="none" stroke="#ececec" stroke-width="4"/>
 <rect x="45" y="42" width="3.5" height="10" rx="1.5" fill="#e0e0e0"/>
</svg>
<!-- La semana: row 1 -->
<svg class="a" style="left:667px;top:467px" width="96" height="96" viewBox="0 0 96 96">
 <rect width="96" height="96" fill="#fcf6ea"/>
 <path d="M0 0h40c-10 10-16 24-18 40-2 16 0 30 6 42H0z" fill="#f3ebdc"/>
 <path d="M6 8c4 20 4 50 10 74M14 4c-2 24 2 50 8 76M34 6c-6 12-10 24-10 40" stroke="#d8ccc0" stroke-width="1" fill="none"/>
 <path d="M20 30c10-8 30-10 44-2 10 6 14 20 12 34-2 12-14 20-30 20-16 0-26-10-28-26z" fill="#fde9dc"/>
 <path d="M30 20c10-6 26-6 36 2" stroke="#d9b8a8" stroke-width="1" fill="none"/>
 <ellipse cx="27" cy="47" rx="7.5" ry="8.5" fill="#2a2a60"/>
 <ellipse cx="27" cy="48" rx="5.5" ry="6.5" fill="#5860c8"/>
 <circle cx="29" cy="45" r="1.8" fill="#fff"/>
 <path d="M52 44c4-4 10-5 14-2" stroke="#222" stroke-width="2" fill="none"/>
 <path d="M44 62c2 1 4 1 6 0" stroke="#c88" stroke-width="1" fill="none"/>
 <path d="M64 4l6 10 12 2-10 6 2 10-8-6-10 4 4-10-8-8 10 0z" fill="#2e3a8a"/>
 <path d="M70 12l4 6-6 0z" fill="#6a7ad8"/>
 <path d="M72 26c8-6 18-6 24-2v24c-6 2-14 2-20-4l-6-8z" fill="#f8dccc"/>
 <path d="M74 30l14 6M74 40l16 2" stroke="#c89a88" stroke-width="1" fill="none"/>
 <path d="M28 74c10-4 26-4 38 0l2 8H26z" fill="#2a2650"/>
 <path d="M6 76l8-8 6 6-4 6z" fill="#f2d25a"/>
 <rect x="0" y="82" width="96" height="14" fill="#0b0b0b"/>
 <text x="17" y="93" font-family="Liberation Sans" font-size="9" font-weight="bold" fill="#e8e8e8" letter-spacing="1.2">HOYOVERSE</text>
 <use href="#shield" x="51" y="50" width="42" height="45"/>
</svg>
<div class="a" style="left:785px;top:469px;width:91px;height:90px;background:#fff;box-shadow:0 0 0 1px #ececec,1px 1px 2px rgba(0,0,0,.18)"></div>
<svg class="a" style="left:785px;top:469px" width="91" height="90" viewBox="0 0 91 90">
 <path d="M4 52l8-6-2-2 14-8-2-2 22-14 8-6 4 2 6-4 6 4 4 2-4 4 8 2-2 4 6 2-4 4 6 2-6 6 8 2-6 4 2 4-10 4-10 6-14 8 2 2-10 6-8 4-6 2 2-4-8 2 4-4-8 0 4-4-8-2 6-4-8-2 6-4z" fill="#24a244"/>
 <circle cx="44" cy="42" r="10.5" fill="none" stroke="#fff" stroke-width="2.3"/>
 <path d="M34 54l2.5-7 5 4z" fill="#fff"/>
 <path d="M40 37c1 4 4 8 8 10l2.5-2-3-2-1.2 1c-2-1-3.5-3-4.5-5l1-1.2-2-3z" fill="#fff"/>
</svg>
<div class="a" style="left:901px;top:469px;width:90px;height:90px;background:#efefef;box-shadow:0 0 0 1px #e6e6e6,1px 1px 2px rgba(0,0,0,.18)"></div>
<svg class="a" style="left:901px;top:469px" width="90" height="90" viewBox="0 0 90 90">
 <defs><radialGradient id="wsg" cx=".5" cy=".5" r=".5"><stop offset="0" stop-color="#2cb814"/><stop offset=".7" stop-color="#3cc820"/><stop offset="1" stop-color="#8ae868"/></radialGradient></defs>
 <ellipse cx="45" cy="47" rx="34" ry="36" fill="url(#wsg)"/>
 <path d="M54 6c16 4 28 18 28 34 0 10-4 18-10 24" fill="none" stroke="#6ada48" stroke-width="5"/>
 <path d="M14 70c-8-10-10-26-4-40" fill="none" stroke="#58d03a" stroke-width="4"/>
 <path d="M30 84c10 4 24 4 34-2" fill="none" stroke="#7ae058" stroke-width="3"/>
 <circle cx="45" cy="45" r="14.5" fill="none" stroke="#fff" stroke-width="3.2"/>
 <path d="M29 63l3.5-10 7 5.5z" fill="#fff"/>
 <path d="M38 37c1 6 5 11 11 13l3.5-3-4-3-2 1.5c-3-1.5-5-4-6-7l1.5-1.8-3-3.5z" fill="#fff"/>
</svg>
<div class="a" style="left:1017px;top:509px;width:91px;height:50px;background:#fff;box-shadow:0 0 0 1px #ececec,1px 1px 2px rgba(0,0,0,.18)"></div>
<svg class="a" style="left:1017px;top:509px" width="91" height="50" viewBox="0 0 91 50">
 <path d="M35 5c3-4 12-4 15 0l1 7-15 0z" fill="#6a3e22"/>
 <ellipse cx="43" cy="13" rx="6" ry="7" fill="#f6e2d6"/>
 <path d="M37 22c2 4 8 6 12 2l10 8 8 12-6 4H36z" fill="#fff" stroke="#333" stroke-width=".9"/>
 <path d="M34 28c2-3 8-4 10-2l2 22H34z" fill="#111"/>
 <path d="M14 44l6-4 2 4 4-6 2 4 4-4 3 5" fill="none" stroke="#111" stroke-width="1.8"/>
 <path d="M58 34c4 2 6 6 4 10" fill="none" stroke="#333" stroke-width="1"/>
</svg>
<svg class="a" style="left:1133px;top:499px" width="90" height="60" viewBox="0 0 90 60">
 <rect width="90" height="60" fill="#343434"/>
 <path d="M0 8c20 4 40 10 56 8s24 4 34 10v8c-14-6-30-6-46-2S10 30 0 26z" fill="#3c3c3c"/>
 <path d="M0 40c20-4 50-8 90 4v6c-30-8-60-6-90 0z" fill="#2c2c2c"/>
 <path d="M19 0c8 6 14 10 22 16 8 6 16 10 24 16 8 6 16 12 25 18" fill="none" stroke="#9a9a9a" stroke-width="1.4"/>
</svg>
<svg class="a" style="left:1246px;top:466px" width="98" height="98" viewBox="0 0 98 98">
 <circle cx="49" cy="49" r="48.2" fill="#1882e8"/>
 <g fill="none" stroke="#fff" stroke-linecap="round">
  <ellipse cx="49" cy="50" rx="34" ry="11" transform="rotate(14 49 50)" stroke-width="6"/>
  <ellipse cx="49" cy="50" rx="34" ry="11" transform="rotate(72 49 50)" stroke-width="6"/>
  <ellipse cx="49" cy="50" rx="32" ry="10" transform="rotate(-48 49 50)" stroke-width="5"/>
 </g>
 <ellipse cx="49" cy="50" rx="12" ry="12" fill="#1882e8"/>
</svg>
<svg class="a" style="left:1365px;top:469px" width="91" height="90" viewBox="0 0 91 90">
 <defs><linearGradient id="sky" x1="0" y1="0" x2="0" y2="1"><stop offset="0" stop-color="#5aa8e0"/><stop offset="1" stop-color="#b8dcf2"/></linearGradient></defs>
 <rect width="91" height="90" fill="#0c0c0c"/>
 <rect x="0" y="3" width="91" height="83" fill="url(#sky)"/>
 <rect x="0" y="58" width="30" height="28" fill="#c8c0b0"/>
 <path d="M0 60c6-6 14-8 24-4l4 8H0z" fill="#7a8a5a"/>
 <path d="M24 10v56M17 16h14M14 40h10M20 46v30" stroke="#555" stroke-width="1.6"/>
 <path d="M56 30L91 8v16L66 44z" fill="#e8e2d0"/>
 <path d="M62 32l24-14-4 22-22 10z" fill="#8a6a48"/>
 <path d="M70 86L84 26l7-4v64z" fill="#efeadc"/>
 <path d="M74 86l12-56" stroke="#3a3a3a" stroke-width="1.4"/>
 <path d="M34 26c0-10 6-16 14-16s14 6 14 14l-2 8H36z" fill="#2a2220"/>
 <ellipse cx="47" cy="34" rx="11" ry="13" fill="#c49878"/>
 <path d="M24 86c2-18 10-30 24-32 14 2 24 10 26 32z" fill="#4e6e3a"/>
 <rect x="29" y="50" width="34" height="34" fill="#8ec0ec"/>
 <path d="M29 50h34v14c-10-4-22-2-34 4z" fill="#3a70b8"/>
 <rect x="29" y="72" width="34" height="12" fill="#58b040"/>
 <text x="55" y="72" font-family="Liberation Sans" font-size="10" font-weight="bold" fill="#e02828">3</text>
 <rect x="0" y="86" width="91" height="4" fill="#0c0c0c"/>
 <text x="28" y="3.5" font-family="Liberation Sans" font-size="4.5" font-weight="bold" fill="#ddd">easy peasy</text>
</svg>
<svg class="a" style="left:1494px;top:469px" width="64" height="90" viewBox="0 0 64 90">
 <rect width="64" height="90" fill="#e2e2e6"/>
 <path d="M0 0h64v26c-6 4-10 10-14 16l-6 14-8 0-8-12C20 38 8 30 0 30z" fill="#1e2430"/>
 <path d="M14 0l10 14M54 8l6 18M46 4l4 10" stroke="#2e7a78" stroke-width="2.5" fill="none" opacity=".8"/>
 <ellipse cx="33" cy="22" rx="4" ry="5" fill="#d8c0b8"/>
 <path d="M24 30c4-2 12-2 16 0l2 12H24z" fill="#d6e0ea"/>
 <path d="M27 42h12l-1 10H28z" fill="#e4ccc0"/>
 <path d="M22 34l4 0 4 30-4 2z" fill="#34407a"/>
 <path d="M26 54h18l4 36H28z" fill="#4a5262"/>
 <path d="M12 58l8-2 22 24M38 86l16-10" stroke="#15181e" stroke-width="3" fill="none"/>
</svg>
<!-- row 2 -->
<div class="a" style="left:691px;top:631px;width:47px;height:90px;box-shadow:1px 1px 2px rgba(0,0,0,.18)"></div>
<svg class="a" style="left:691px;top:631px" width="47" height="90" viewBox="0 0 47 90">
 <rect width="47" height="90" fill="#f6f4f4"/>
 <path d="M8 16c2-12 18-16 30-10 8 4 10 14 8 24l-4 8-6-10-10 0-8 12c-6-6-10-14-10-24z" fill="#1e1818"/>
 <path d="M14 24c2-4 14-4 18 2l2 10-4 6h-10l-6-8z" fill="#fff"/>
 <path d="M24 40h12l2 8 9 6v36H6l-2-14c0-10 6-20 12-24l6-6z" fill="#2a2222"/>
 <path d="M10 64c2-4 8-6 12-2M24 62c4-4 10-4 12 2" stroke="#6a6060" stroke-width="1.6" fill="none"/>
 <path d="M0 50v40h6c-4-12-4-28-6-40z" fill="#fff"/>
</svg>
<div class="a" style="left:802px;top:631px;width:57px;height:90px;box-shadow:1px 1px 2px rgba(0,0,0,.18)"></div>
<svg class="a" style="left:802px;top:631px" width="57" height="90" viewBox="0 0 57 90">
 <rect width="57" height="90" fill="#d6c2a0"/>
 <path d="M7 90V30C7 12 18 4 28.5 4S50 12 50 30v60" fill="#e6d8bc"/>
 <path d="M18 14c4-8 18-8 22 0l4 12 6 6-2 14 4 14-2 16-4 14H14l-4-14 2-14-2-16 4-12z" fill="#7c7870"/>
 <path d="M20 30l8 16 10-18M14 62l14 10 14-10M22 90l6-18 6 18" stroke="#66625c" stroke-width="1.8" fill="none"/>
</svg>
<div class="a" style="left:920px;top:631px;width:52px;height:90px;box-shadow:1px 1px 2px rgba(0,0,0,.18)"></div>
<svg class="a" style="left:920px;top:631px" width="52" height="90" viewBox="0 0 52 90">
 <defs><linearGradient id="c7g" x1="0" y1="0" x2="0" y2="1"><stop offset="0" stop-color="#342c36"/><stop offset=".6" stop-color="#5a5262"/><stop offset="1" stop-color="#6a6270"/></linearGradient></defs>
 <rect width="52" height="90" fill="url(#c7g)"/>
 <ellipse cx="26" cy="86" rx="34" ry="18" fill="#8a8290"/>
 <ellipse cx="24" cy="9" rx="4" ry="5" fill="#7a7078"/>
 <path d="M12 20c4-6 24-6 28 0l2 8-4 4-2 12H16l-2-12-4-4z" fill="#948a94"/>
 <path d="M16 30h20l-2 14H18z" fill="#3a3038"/>
 <path d="M16 42h18l-2 14H18z" fill="#2e2836"/>
 <path d="M18 56h6l-1 32h-4zM27 56h6l1 30h-5z" fill="#4e4450"/>
 <path d="M8 48l4-16M44 46l-4-14" stroke="#5a5058" stroke-width="3"/>
 <path d="M32 80h12l-6 10h-8z" fill="#2a2430"/>
</svg>
<div class="a" style="left:1017px;top:654px;width:91px;height:67px;background:#0e0e0e;box-shadow:1px 1px 2px rgba(0,0,0,.25)"></div>
<!-- Al principio -->
<svg class="a" style="left:669px;top:805px" width="93" height="97" viewBox="0 0 93 97">
 <defs><radialGradient id="lolt" cx=".55" cy=".5" r=".5"><stop offset="0" stop-color="#3ab0c0"/><stop offset=".6" stop-color="#1a7a90"/><stop offset="1" stop-color="#0a4a5a"/></radialGradient>
 <linearGradient id="lolg" x1="0" y1="0" x2="1" y2="1"><stop offset="0" stop-color="#f0c870"/><stop offset=".5" stop-color="#c8962e"/><stop offset="1" stop-color="#8a6418"/></linearGradient></defs>
 <circle cx="46" cy="47" r="45" fill="#0c0c0c"/>
 <circle cx="46" cy="47" r="41" fill="url(#lolg)"/>
 <circle cx="46" cy="47" r="37" fill="#0c0c0c"/>
 <circle cx="49" cy="47" r="34" fill="url(#lolt)"/>
 <path d="M40 28c14-4 26 6 26 20 0 10-6 18-14 20" fill="none" stroke="#5ad0d8" stroke-width="3" opacity=".6"/>
 <path d="M7 1h35v78h47l-14 17H8l11-14V18z" fill="#0c0c0c"/>
 <path d="M14 4h24v78h44l-9 11H14l8-10V19z" fill="url(#lolg)"/>
 <path d="M22 8h10v70H22z" fill="#f0c868" opacity=".55"/>
</svg>
<svg class="a" style="left:784px;top:842px" width="93" height="56" viewBox="0 0 93 56">
 <rect width="93" height="56" fill="#6e6e6e"/>
 <rect x="10" y="0" width="73" height="56" fill="#1e1a22"/>
 <rect x="10" y="2.5" width="73" height="50.5" fill="#9088c0"/>
 <path d="M62 2.5h21v14l-18-2z" fill="#5a78c8"/>
 <path d="M58 14l25 2v14l-22-4z" fill="#c4a88e"/>
 <path d="M14 16c6-10 22-14 40-10 10 2 16 10 14 20l-6 8-8-4c-4-6-14-8-24-6l-8 6z" fill="#6a4c44"/>
 <path d="M10 22l14 2 6 10-2 18H10z" fill="#a04c88"/>
 <ellipse cx="45" cy="28" rx="12" ry="9" fill="#e4c2b4"/>
 <path d="M54 16l4 2v8l-4-1z" fill="#e8e8f0"/>
 <path d="M24 40c10-6 34-10 59-4v17H20z" fill="#4a3a72"/>
 <path d="M40 37h22l-4 8H44z" fill="#8c3c92"/>
 <path d="M34 53l6-6 6 4 6-5 6 6 6-4 2 5z" fill="#a6d6f0"/>
 <g fill="#f4f4f4"><rect x="2" y="3" width="6" height="5"/><rect x="2" y="12" width="6" height="5"/><rect x="2" y="21" width="6" height="5"/><rect x="2" y="30" width="6" height="5"/><rect x="2" y="39" width="6" height="5"/><rect x="2" y="48" width="6" height="5"/><rect x="85" y="3" width="6" height="5"/><rect x="85" y="12" width="6" height="5"/><rect x="85" y="21" width="6" height="5"/><rect x="85" y="30" width="6" height="5"/><rect x="85" y="39" width="6" height="5"/><rect x="85" y="48" width="6" height="5"/></g>
</svg>
<svg class="a" style="left:900px;top:842px" width="93" height="56" viewBox="0 0 93 56">
 <rect width="93" height="56" fill="#6e6e6e"/>
 <rect x="10" y="0" width="73" height="56" fill="#1a1422"/>
 <rect x="10" y="2.5" width="73" height="50.5" fill="#2c2250"/>
 <ellipse cx="45" cy="22" rx="20" ry="16" fill="#4a4a9a"/>
 <circle cx="45" cy="20" r="21" fill="none" stroke="#5a2c58" stroke-width="5"/>
 <path d="M10 26c10-4 20-2 26 6v10H10z" fill="#6a8ad0"/>
 <path d="M83 26c-10-4-20-2-26 6v10h26z" fill="#6484cc"/>
 <path d="M44 4l6 5-6 6-6-6z" fill="#c43cd4"/>
 <path d="M37 22h16l-8 16z" fill="#c43c9c"/>
 <path d="M36 30h6l2 14h-8zM48 30h6l-1 14h-7z" fill="#1e2052"/>
 <path d="M10 40h73v13H10z" fill="#1c1226"/>
 <ellipse cx="42" cy="47" rx="12" ry="3.5" fill="#6a2a6c"/>
 <g fill="#f4f4f4"><rect x="2" y="3" width="6" height="5"/><rect x="2" y="12" width="6" height="5"/><rect x="2" y="21" width="6" height="5"/><rect x="2" y="30" width="6" height="5"/><rect x="2" y="39" width="6" height="5"/><rect x="2" y="48" width="6" height="5"/><rect x="85" y="3" width="6" height="5"/><rect x="85" y="12" width="6" height="5"/><rect x="85" y="21" width="6" height="5"/><rect x="85" y="30" width="6" height="5"/><rect x="85" y="39" width="6" height="5"/><rect x="85" y="48" width="6" height="5"/></g>
</svg>
<!-- status bar -->
<div class="t" style="left:503px;top:953px;color:#222">17 elementos</div>
<div class="a" style="left:584px;top:952px;width:1px;height:14px;background:#f0f0f0"></div>
<div class="t" style="left:594px;top:953px;color:#222">1 elemento seleccionado&nbsp; 1.71 MB</div>
<svg class="a" style="left:1566px;top:951px" width="18" height="16" viewBox="0 0 18 16"><g fill="none" stroke="#888"><rect x=".5" x2="" y=".5" width="3" height="3"/><rect x=".5" y="6" width="3" height="3"/><rect x=".5" y="11.5" width="3" height="3"/></g><path d="M6 2h4M12 2h5M6 7.5h4M12 7.5h5M6 13h4M12 13h5" stroke="#777"/></svg>
<div class="a" style="left:1586px;top:949px;width:22px;height:21px;background:#cce8ff;border:1px solid #99d1ff"></div>
<svg class="a" style="left:1590px;top:953px" width="14" height="12" viewBox="0 0 14 12"><rect x=".5" y=".5" width="13" height="11" fill="#fff" stroke="#777"/><rect x="2" y="2" width="10" height="8" fill="#5b8fb0"/><path d="M2 6c3-2 6 1 10 0v4H2z" fill="#23465e"/></svg>

<!-- taskbar -->
<div id="tb" class="a"></div>
<svg class="a" style="left:16px;top:1052px" width="17" height="17" viewBox="0 0 17 17"><path d="M0 2.3L7 1.3v6.8H0zM8 1.1L17 0v8.1H8zM0 9h7v6.8L0 14.8zM8 9h9v8L8 15.9z" fill="#000"/></svg>
<div class="a" style="left:48px;top:1040px;width:344px;height:40px;background:#fff;border-left:1px solid #b8bcc2;border-bottom:1px solid #a8acb2"></div>
<svg class="a" style="left:59px;top:1051px" width="19" height="19" viewBox="0 0 19 19"><circle cx="11.5" cy="7.5" r="5.8" fill="none" stroke="#111" stroke-width="1.4"/><path d="M7.3 11.7L1.5 17.5" stroke="#111" stroke-width="1.5"/></svg>
<div class="a" style="left:88px;top:1052px;font-size:15.5px;line-height:18px;letter-spacing:-0.45px;color:#333;white-space:nowrap">Escribe aquí para buscar</div>
<svg class="a" style="left:316px;top:1042px" width="74" height="38" viewBox="0 0 74 38">
 <g fill="#f4b400"><circle cx="17" cy="16" r="13"/></g>
 <g fill="#fcd22a"><path d="M17 1l3 6 5-4-1 7 7-1-4 6 6 3-6 3 4 5-7 0 1 6-5-3-3 6-3-6-5 3 1-6h-7l4-5-6-3 6-3-4-6 7 1-1-7 5 4z"/></g>
 <circle cx="17" cy="16" r="7" fill="#7a3a1a"/>
 <path d="M17 29v9" stroke="#4a9a30" stroke-width="2"/>
 <path d="M50 14v24M50 28c6-4 10-10 12-16M50 26c-4-2-6-6-8-8" stroke="#4a9a30" stroke-width="2" fill="none"/>
 <g fill="#fcc21a"><circle cx="52" cy="10" r="7"/><circle cx="64" cy="18" r="6"/><circle cx="40" cy="22" r="6"/></g>
 <g fill="#8a3a20"><circle cx="52" cy="10" r="3.5"/><circle cx="64" cy="18" r="3"/><circle cx="40" cy="22" r="3"/></g>
 <path d="M40 36c2-6 6-7 9-6-2 4-5 6-9 6zM60 34c-2-6-6-7-9-5 2 4 5 6 9 5z" fill="#6ab04a"/>
</svg>
<div class="a" style="left:408px;top:1053px;width:15px;height:15px;border:2px solid #111;border-radius:50%"></div>
<svg class="a" style="left:455px;top:1051px" width="17" height="17" viewBox="0 0 17 17"><g fill="none" stroke="#111" stroke-width="1.3"><path d="M1.5 .5v2.5h8.5V.5"/><rect x="1.5" y="5.5" width="9" height="6"/><path d="M1.5 16.5V14h8.5v2.5"/><path d="M14.5 .5v2.5M14.5 8v8"/></g><rect x="13.5" y="4.5" width="2.2" height="2.2" fill="#111"/></svg>
<!-- task icons -->
<svg class="a" style="left:503px;top:1048px" width="24" height="24" viewBox="0 0 50 49"><defs><linearGradient id="teg1" x1="0" y1="0" x2="1" y2="1"><stop offset="0" stop-color="#2fb4e8"/><stop offset=".6" stop-color="#4cd47a"/><stop offset="1" stop-color="#7ee04a"/></linearGradient><linearGradient id="teg2" x1="0" y1="0" x2="1" y2="1"><stop offset="0" stop-color="#2a8ad8"/><stop offset="1" stop-color="#1a4aa8"/></linearGradient></defs><path d="M2 24C2 10 14 1 26 1c14 0 23 10 23 21 0 8-6 12-13 12-5 0-9-2-9-5 0-2 2-3 2-6 0-6-6-10-12-10C9 13 3 18 2 24z" fill="url(#teg1)"/><path d="M2 24c1-7 7-11 15-11 6 0 12 4 12 10 0 3-2 4-2 6 0 3 4 5 9 5 7 0 12-3 13-7-2 14-12 22-24 22C12 49 2 38 2 24z" fill="url(#teg2)"/><path d="M17 30c0-6 3-11 8-13-6 0-12 4-12 11 0 8 7 15 16 18 5 1 10 0 14-2-14 2-26-4-26-14z" fill="#1a3c8a"/></svg>
<div class="a" style="left:495px;top:1078px;width:40px;height:2px;background:#0f6cc4"></div>
<div class="a" style="left:540px;top:1040px;width:48px;height:40px;background:rgba(255,255,255,.45)"></div>
<div class="a" style="left:540px;top:1078px;width:48px;height:2px;background:#0f6cc4"></div>
<svg class="a" style="left:552px;top:1050px" width="23" height="20" viewBox="0 0 23 20"><path d="M0 1h8l2 2h13v16H0z" fill="#f5c623"/><path d="M0 3h10l1 0v1H0z" fill="#c9a010"/><rect x="0" y="4" width="23" height="15" fill="#fad45a"/><path d="M5 18v-7a2 2 0 0 1 2-2h9a2 2 0 0 1 2 2v7h-4v-4h-5v4z" fill="#2a78c8"/></svg>
<svg class="a" style="left:601px;top:1049px" width="23" height="23" viewBox="0 0 23 23"><path d="M6 5V2h11v3" fill="none" stroke="#3a98e0" stroke-width="1.8"/><rect x="0" y="5" width="23" height="18" rx="3" fill="#1d4f9a"/><rect x="7" y="9" width="4" height="4" fill="#f25022"/><rect x="12" y="9" width="4" height="4" fill="#7fba00"/><rect x="7" y="14" width="4" height="4" fill="#00a4ef"/><rect x="12" y="14" width="4" height="4" fill="#ffb900"/></svg>
<svg class="a" style="left:650px;top:1048px" width="24" height="23" viewBox="0 0 24 23"><path d="M0 7L12 0l12 7v16H0z" fill="#1a64b8"/><path d="M3 7h18l-9 6z" fill="#f4f8fc"/><path d="M0 8l12 7 12-7v15H0z" fill="#2ea0e8"/><path d="M0 23L24 8v15z" fill="#38b4f0"/></svg>
<svg class="a" style="left:702px;top:1048px" width="18" height="24" viewBox="0 0 18 24"><path d="M4 3l9-3 5 3v18l-5 3-9-3z" fill="#e8541a"/><path d="M0 5l13-5v24L0 19z" fill="#c0283a"/><path d="M4 6l6-2v16l-6-2z" fill="#d8e4f0"/></svg>
<svg class="a" style="left:748px;top:1048px" width="24" height="24" viewBox="0 0 24 24"><ellipse cx="12" cy="12" rx="11" ry="11.3" fill="none" stroke="#e8294f" stroke-width="1.3"/><ellipse cx="13.5" cy="12" rx="7" ry="9.5" fill="none" stroke="#e8294f" stroke-width="1.3"/></svg>
<div class="a" style="left:740px;top:1078px;width:40px;height:2px;background:#0f6cc4"></div>
<svg class="a" style="left:798px;top:1049px" width="21" height="21" viewBox="0 0 21 21"><rect width="21" height="21" rx="4" fill="#001e36"/><text x="3.5" y="15" font-family="Liberation Sans" font-weight="bold" font-size="11" fill="#31a8ff" letter-spacing="-.5">Ps</text></svg>
<svg class="a" style="left:846px;top:1049px" width="23" height="23"><use href="#steam"/></svg>
<svg class="a" style="left:895px;top:1049px" width="23" height="23"><use href="#steam"/></svg>
<div class="a" style="left:887px;top:1078px;width:40px;height:2px;background:#0f6cc4"></div>
<svg class="a" style="left:944px;top:1048px" width="24" height="24" viewBox="0 0 24 24"><rect width="24" height="24" fill="#2d3940"/><path d="M7 7l4-4 4 4-4 4z" fill="#fff"/><path d="M11 11l6-6 3 3-9 9-3-3z" fill="#52d3bb"/></svg>
<!-- tray -->
<svg class="a" style="left:1596px;top:1051px" width="26" height="17" viewBox="0 0 26 17"><rect x="1" y="1" width="21" height="15" rx="1.5" fill="none" stroke="#111" stroke-width="1.4"/><path d="M22 4h2.5v10a2 2 0 0 1-2.5 2" fill="none" stroke="#111" stroke-width="1.4"/><rect x="4" y="6.5" width="6" height="6" fill="none" stroke="#111" stroke-width="1.3"/><path d="M4 3.8h15M12.5 7h6.5M12.5 9.7h6.5M12.5 12.4h6.5" stroke="#111" stroke-width="1.2"/></svg>
<svg class="a" style="left:1646px;top:1055px" width="14" height="9" viewBox="0 0 14 9"><path d="M1 8l6-6 6 6" fill="none" stroke="#111" stroke-width="1.4"/></svg>
<svg class="a" style="left:1671px;top:1051px" width="13" height="17" viewBox="0 0 13 17"><rect x="1" y="5" width="7" height="7" rx="1" fill="none" stroke="#111" stroke-width="1.3"/><path d="M8 7l4-2v7l-4-2z" fill="none" stroke="#111" stroke-width="1.2"/><path d="M3 2.5a5 5 0 0 1 5 0M3 14.5a5 5 0 0 0 5 0" fill="none" stroke="#111" stroke-width="1.1"/></svg>
<svg class="a" style="left:1694px;top:1055px" width="16" height="10" viewBox="0 0 16 10"><rect x=".7" y=".7" width="13" height="8.6" fill="none" stroke="#111" stroke-width="1.3"/><rect x="2.5" y="2.5" width="4" height="5" fill="#111"/><rect x="14" y="3" width="2" height="4" fill="#111"/></svg>
<svg class="a" style="left:1719px;top:1053px" width="15" height="14" viewBox="0 0 15 14"><path d="M1 13A12 12 0 0 1 13 1M4 13a9 9 0 0 1 9-9M7 13a6 6 0 0 1 6-6" fill="none" stroke="#111" stroke-width="1.2"/><circle cx="11.5" cy="11.5" r="1.6" fill="#111"/></svg>
<svg class="a" style="left:1741px;top:1051px" width="17" height="17" viewBox="0 0 17 17"><path d="M1 6h3l4-4v13l-4-4H1z" fill="none" stroke="#111" stroke-width="1.2"/><path d="M10.5 6a3 3 0 0 1 0 5M12.5 4a6 6 0 0 1 0 9" fill="none" stroke="#111" stroke-width="1.1"/><path d="M14.5 2a9 9 0 0 1 0 13" fill="none" stroke="#999" stroke-width="1"/></svg>
<div class="a" style="left:1768px;top:1053px;font-size:11px;line-height:13px;color:#111;letter-spacing:-0.2px">ESP</div>
<div class="a" style="left:1803px;top:1044px;width:59px;text-align:center;font-size:12px;line-height:14px;color:#111;letter-spacing:-0.5px">09:24</div>
<div class="a" style="left:1801px;top:1062px;width:62px;text-align:center;font-size:12px;line-height:14px;color:#111;letter-spacing:-0.1px">23/11/2022</div>
<svg class="a" style="left:1879px;top:1052px" width="17" height="15" viewBox="0 0 17 15"><path d="M0 0h17v12H6l-3 3v-3H0z" fill="#111"/><path d="M3 3h11M3 6h11M3 9h11" stroke="#d6dbe9" stroke-width="1.1"/></svg>
<div class="a" style="left:1886px;top:1059px;width:16px;height:16px;border-radius:50%;background:#dfe2ea;border:1px solid #8a8a8a"></div>
<div class="a" style="left:1886px;top:1060px;width:16px;text-align:center;font-size:11px;line-height:14px;color:#111">2</div>
<div class="a" style="left:1915px;top:1040px;width:1px;height:40px;background:#9aa0aa"></div>

</body></html>
